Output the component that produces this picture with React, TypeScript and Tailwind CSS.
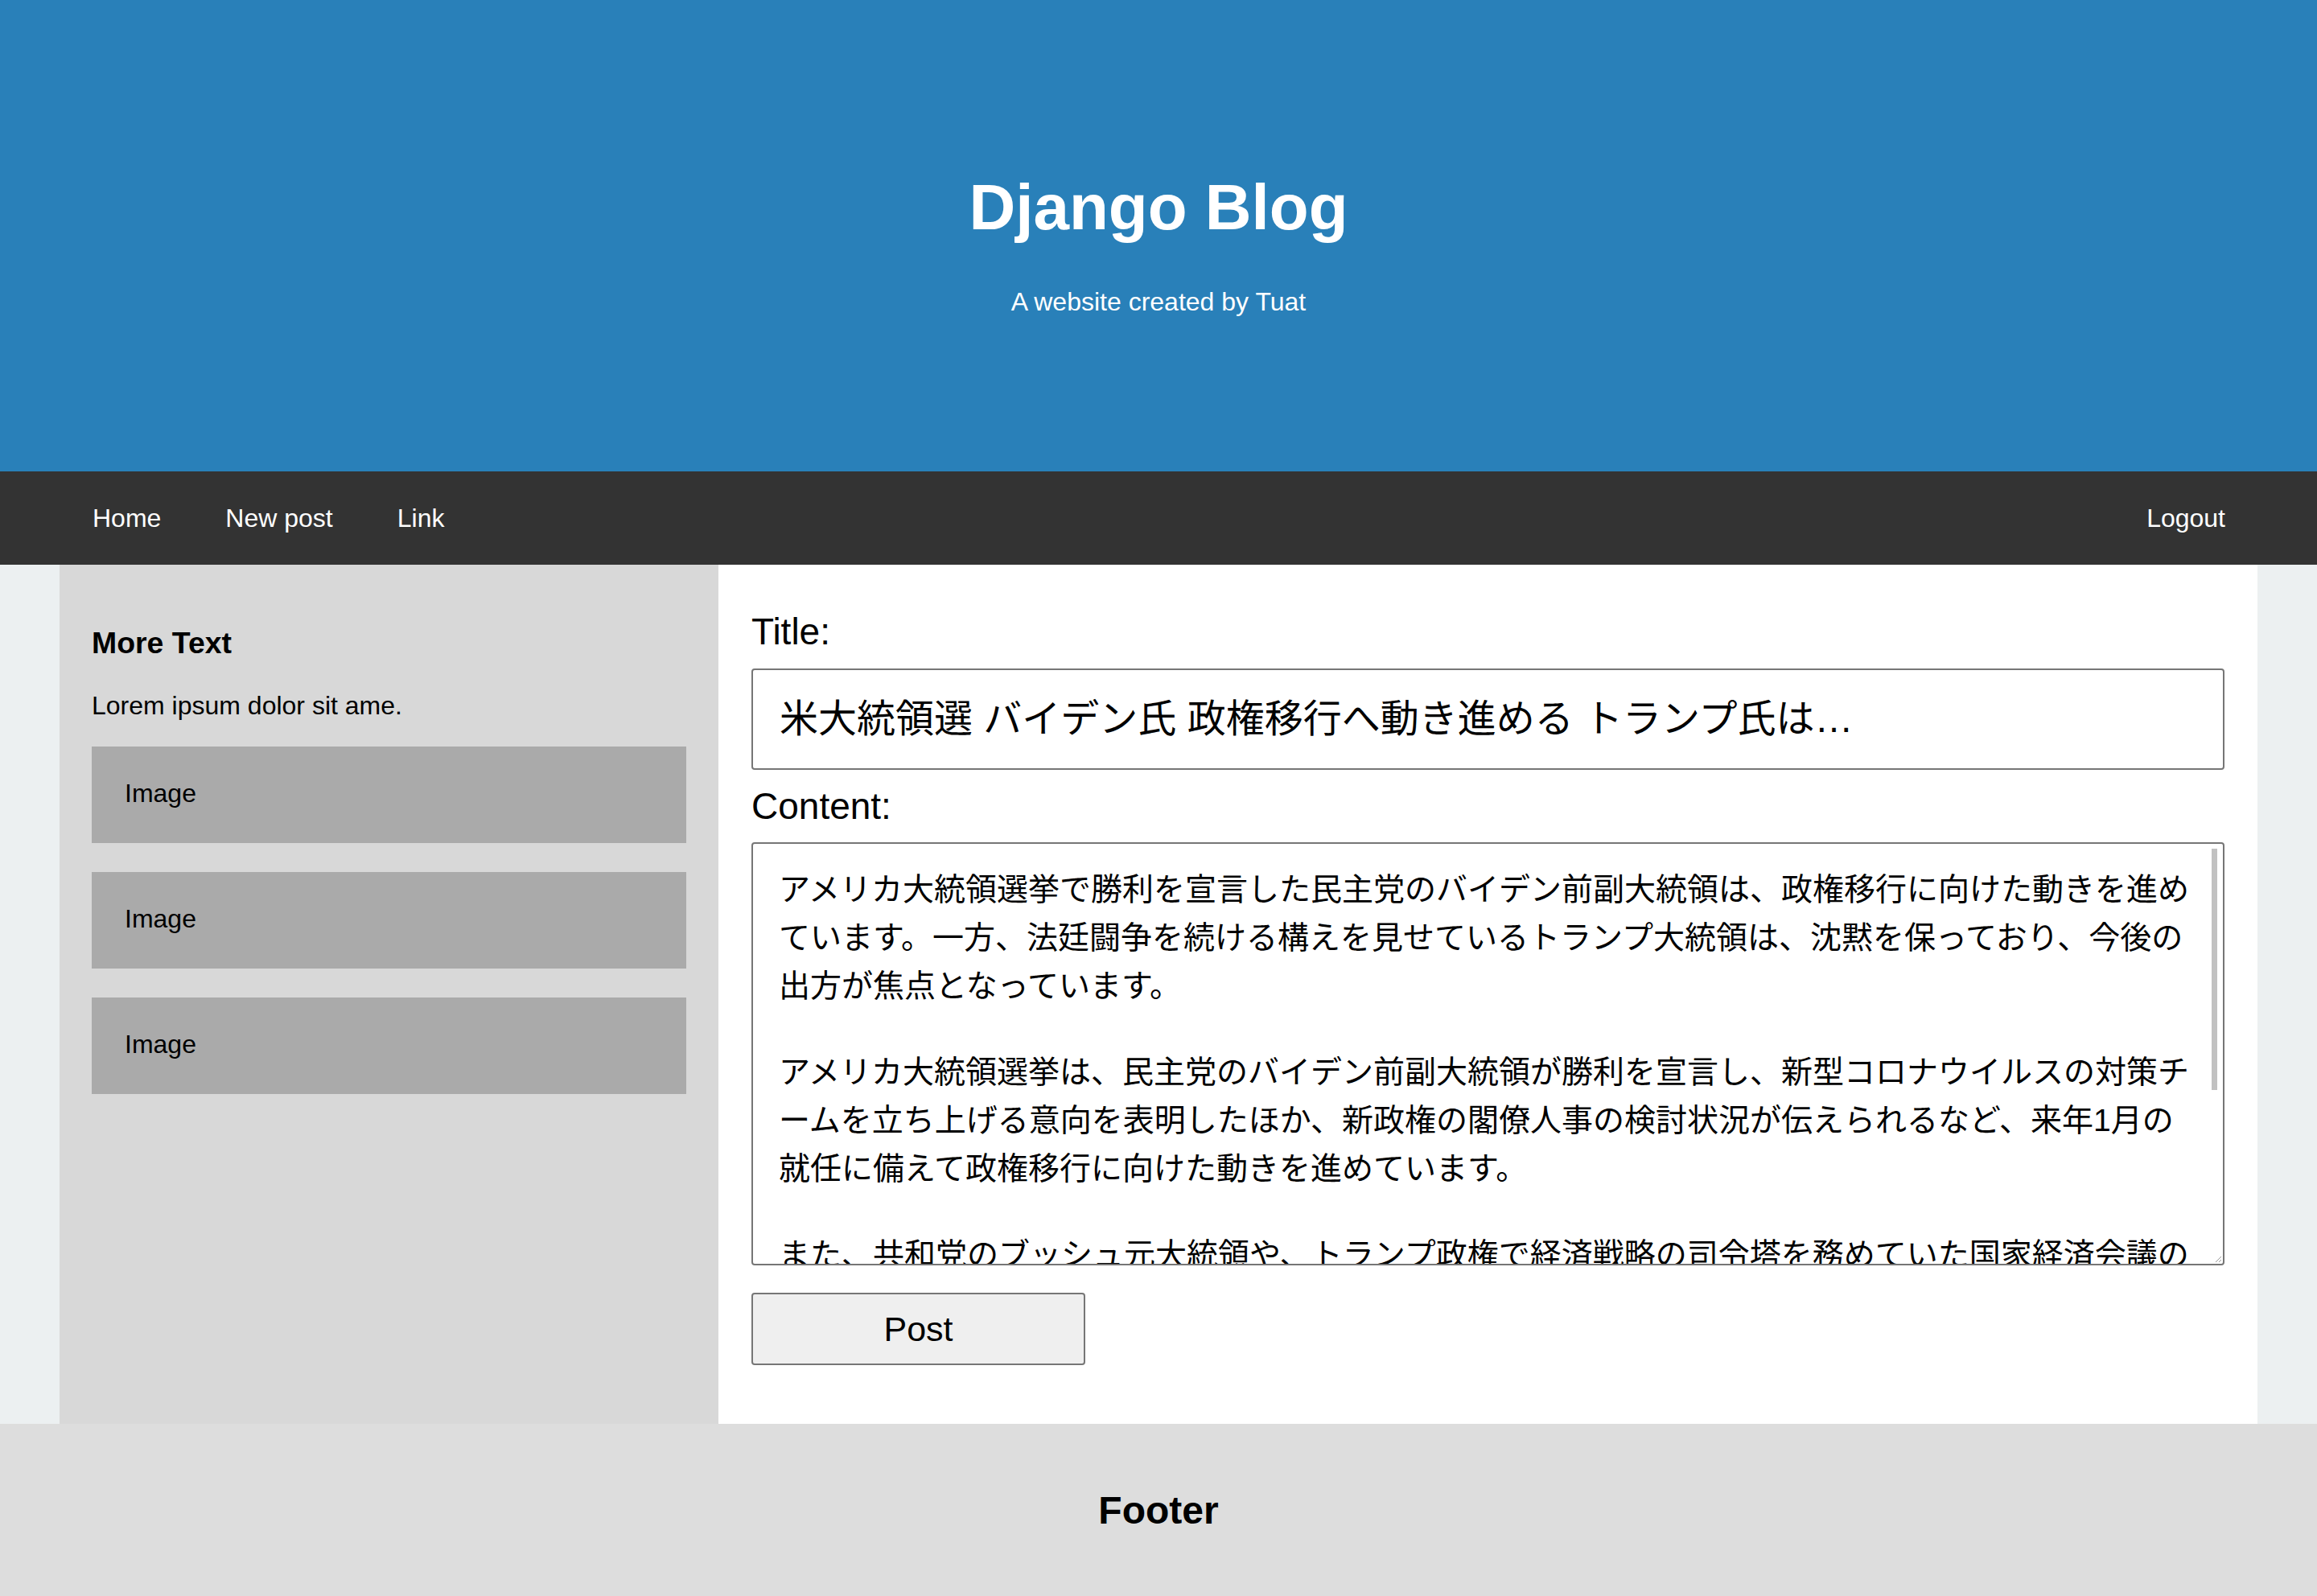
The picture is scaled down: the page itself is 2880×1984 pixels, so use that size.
const navLinks = ["Home", "New post", "Link"];

const paragraphs = [
  [
    "アメリカ大統領選挙で勝利を宣言した民主党のバイデン前副大統領は、政権移行に向けた動きを進め",
    "ています。一方、法廷闘争を続ける構えを見せているトランプ大統領は、沈黙を保っており、今後の",
    "出方が焦点となっています。",
  ],
  [
    "アメリカ大統領選挙は、民主党のバイデン前副大統領が勝利を宣言し、新型コロナウイルスの対策チ",
    "ームを立ち上げる意向を表明したほか、新政権の閣僚人事の検討状況が伝えられるなど、来年1月の",
    "就任に備えて政権移行に向けた動きを進めています。",
  ],
  [
    "また、共和党のブッシュ元大統領や、トランプ政権で経済戦略の司令塔を務めていた国家経済会議の",
  ],
];

function Header() {
  return (
    <header className="h-[586px] bg-[#2980b9] text-white flex flex-col items-center pt-[212px]">
      <h1 className="text-[80px] leading-[92px] font-bold">Django Blog</h1>
      <p className="mt-[53px] text-[32px] leading-[37px]">A website created by Tuat</p>
    </header>
  );
}

function Nav() {
  return (
    <nav className="h-[116px] bg-[#333333] text-white">
      <div className="h-full flex items-center justify-between pl-[75px] pr-[74px]">
        <div className="flex">
          {navLinks.map((l) => (
            <a key={l} href="#" className="px-[40px] text-[32px] leading-[37px]">
              {l}
            </a>
          ))}
        </div>
        <a href="#" className="px-[40px] text-[32px] leading-[37px]">
          Logout
        </a>
      </div>
    </nav>
  );
}

function Sidebar() {
  return (
    <aside className="w-[30%] bg-[#d8d8d8] px-[40px] pt-[76px]">
      <h3 className="text-[37.44px] leading-[43px] font-bold">More Text</h3>
      <p className="mt-[38px] text-[32px] leading-[37px]">Lorem ipsum dolor sit ame.</p>
      <div className="mt-[32px] flex flex-col gap-[36px]">
        {[1, 2, 3].map((i) => (
          <div key={i} className="h-[120px] bg-[#aaaaaa] flex items-center pl-[41px] pb-[4px] text-[32px] leading-[37px]">
            Image
          </div>
        ))}
      </div>
    </aside>
  );
}

function ContentBox() {
  return (
    <div
      role="textbox"
      className="relative h-[526px] border-2 border-[#767676] rounded-[4px] bg-white overflow-hidden pl-[32px] pr-[25px] pt-[27px]"
    >
      <div className="w-[1770px] text-[39px] leading-[60px]">
        {paragraphs.map((p, i) => (
          <div key={i} className={i > 0 ? "mt-[47px]" : ""}>
            {p.map((line) => (
              <div key={line} className="whitespace-nowrap">
                {line}
              </div>
            ))}
          </div>
        ))}
      </div>
      <div className="absolute right-[7px] top-[6px] w-[7px] h-[300px] bg-[#c1c1c1]" />
      <svg className="absolute right-[1px] bottom-[1px]" width="10" height="10" viewBox="0 0 10 10">
        <line x1="9" y1="2" x2="2" y2="9" stroke="#9a9a9a" strokeWidth="1" />
        <line x1="9" y1="6" x2="6" y2="9" stroke="#9a9a9a" strokeWidth="1" />
      </svg>
    </div>
  );
}

function PostForm() {
  return (
    <main className="flex-1 bg-white px-[41px] pt-[57px] pb-[73px] flex flex-col">
      <label className="text-[46px] leading-[53px]">Title:</label>
      <input
        type="text"
        readOnly
        defaultValue="米大統領選 バイデン氏 政権移行へ動き進める トランプ氏は…"
        className="mt-[19px] h-[126px] w-full border-2 border-[#767676] rounded-[4px] px-[33px] pb-[10px] text-[48px] text-black outline-none"
      />
      <label className="mt-[19px] text-[46px] leading-[53px]">Content:</label>
      <div className="mt-[18px]">
        <ContentBox />
      </div>
      <button className="mt-[34px] w-[415px] h-[90px] bg-[#efefef] border-2 border-[#767676] rounded-[4px] text-[43px]">
        Post
      </button>
    </main>
  );
}

export default function App() {
  return (
    <div className="min-h-screen font-['Liberation_Sans','Noto_Sans_CJK_JP',sans-serif] text-black bg-[#ecf0f1]">
      <Header />
      <Nav />
      <div className="px-[74px] flex">
        <Sidebar />
        <PostForm />
      </div>
      <footer className="h-[214px] bg-[#dddddd] flex items-center justify-center">
        <h2 className="text-[48px] leading-[55px] font-bold">Footer</h2>
      </footer>
    </div>
  );
}
